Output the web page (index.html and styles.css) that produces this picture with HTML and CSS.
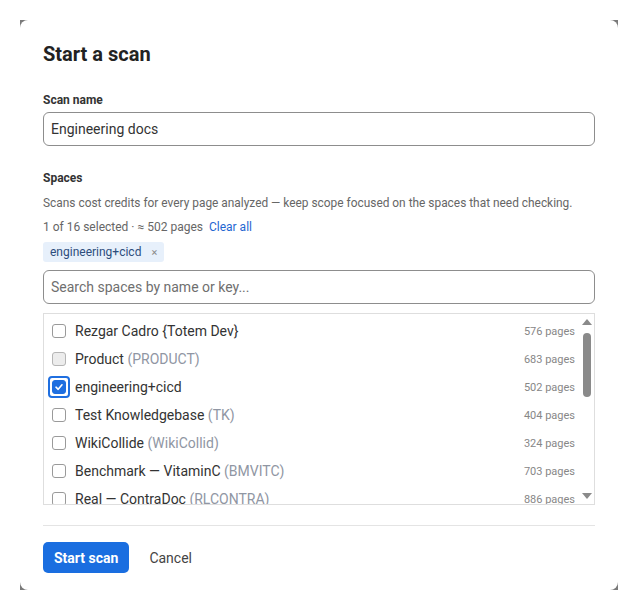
FILE: index.html
```html
<!DOCTYPE html>
<html>
  <head>
    <title>Start a scan</title>
    <link rel="stylesheet" href="styles.css">
  </head>
  <body>
    <div class="frame">
      <div class="dialog">
        <h1 class="title">Start a scan</h1>

        <div class="label label-first">Scan name</div>
        <div class="input">Engineering docs</div>

        <div class="label">Spaces</div>
        <p class="help">Scans cost credits for every page analyzed — keep scope focused on the spaces that need checking.</p>
        <div class="summary">
          <span>1 of 16 selected · ≈ 502 pages</span>
          <span class="link">Clear all</span>
        </div>
        <div class="chips">
          <span class="chip">engineering+cicd <span class="chip-x">×</span></span>
        </div>
        <div class="input placeholder">Search spaces by name or key...</div>

        <div class="listbox">
          <div class="rows">
            <div class="row">
              <span class="check"></span>
              <span class="name">Rezgar Cadro {Totem Dev}</span>
              <span class="pages">576 pages</span>
            </div>
            <div class="row">
              <span class="check check-hover"></span>
              <span class="name">Product <span class="key">(PRODUCT)</span></span>
              <span class="pages">683 pages</span>
            </div>
            <div class="row">
              <span class="ring">
                <span class="check check-on">
                  <svg width="10" height="10" viewBox="0 0 10 10"><path d="M2 5.2 L4.2 7.3 L8 2.8" fill="none" stroke="#fff" stroke-width="1.6" stroke-linecap="round" stroke-linejoin="round"/></svg>
                </span>
              </span>
              <span class="name">engineering+cicd</span>
              <span class="pages">502 pages</span>
            </div>
            <div class="row">
              <span class="check"></span>
              <span class="name">Test Knowledgebase <span class="key">(TK)</span></span>
              <span class="pages">404 pages</span>
            </div>
            <div class="row">
              <span class="check"></span>
              <span class="name">WikiCollide <span class="key">(WikiCollid)</span></span>
              <span class="pages">324 pages</span>
            </div>
            <div class="row">
              <span class="check"></span>
              <span class="name">Benchmark — VitaminC <span class="key">(BMVITC)</span></span>
              <span class="pages">703 pages</span>
            </div>
            <div class="row">
              <span class="check"></span>
              <span class="name">Real — ContraDoc <span class="key">(RLCONTRA)</span></span>
              <span class="pages">886 pages</span>
            </div>
          </div>
          <div class="scrollbar">
            <span class="arrow arrow-up"></span>
            <div class="track"><div class="thumb"></div></div>
            <span class="arrow arrow-down"></span>
          </div>
        </div>

        <div class="divider"></div>

        <div class="actions">
          <button class="button primary">Start scan</button>
          <button class="button plain">Cancel</button>
        </div>
      </div>
    </div>
  </body>
</html>
```

FILE: styles.css
```css
body {
  margin: 0;
  padding: 0;
  background-color: #fff;
  font-family: Roboto, "Noto Sans", sans-serif;
  color: #333;
}

/* the grey shows only at the rounded corners of the dialog */
.frame {
  margin: 20px;
  width: 598px;
  height: 570px;
  background-color: #7a7a7a;
}

.dialog {
  box-sizing: border-box;
  height: 100%;
  padding: 20px 23px;
  background-color: #fff;
  border-radius: 8px;
}

.title {
  margin: 0;
  font-size: 20px;
  line-height: 28px;
  font-weight: 700;
  color: #222;
}

.label {
  margin-top: 24px;
  margin-bottom: 4px;
  font-size: 12px;
  line-height: 16px;
  font-weight: 700;
  color: #333;
}

.input {
  box-sizing: border-box;
  height: 34px;
  padding: 0 7px;
  border: 1px solid #8d8d8d;
  border-radius: 6px;
  font-size: 14px;
  line-height: 32px;
  color: #333;
}

.placeholder {
  color: #6f6f6f;
}

.help {
  margin: 9px 0 0 0;
  font-size: 11.9px;
  line-height: 16px;
  color: #666;
  white-space: nowrap;
}

.summary {
  margin-top: 8px;
  display: flex;
  gap: 6px;
  font-size: 12px;
  line-height: 16px;
  color: #666;
}

.link {
  color: #1f66d1;
}

.chips {
  margin-top: 7px;
  margin-bottom: 8px;
  display: flex;
}

.chip {
  display: inline-flex;
  align-items: center;
  gap: 10px;
  height: 20px;
  padding: 0 7px;
  border-radius: 3px;
  background-color: #e7f0fb;
  color: #2d4d7c;
  font-size: 12px;
}

.chip-x {
  color: #8a8a8a;
  font-size: 11px;
}

.listbox {
  margin-top: 9px;
  height: 192px;
  box-sizing: border-box;
  border: 1px solid #dedede;
  display: flex;
}

.rows {
  flex: 1;
  overflow: hidden;
  padding: 3px 4px 0 8px;
}

.row {
  height: 28px;
  display: flex;
  align-items: center;
  font-size: 14px;
  color: #333;
}

.check {
  box-sizing: border-box;
  width: 14px;
  height: 14px;
  border: 1px solid #9a9a9a;
  border-radius: 3px;
  background-color: #fff;
  display: flex;
  align-items: center;
  justify-content: center;
}

.check-hover {
  background-color: #ececec;
  border-color: #b5b5b5;
}

.check-on {
  background-color: #1f6fe0;
  border-color: #1f6fe0;
}

.ring {
  margin: 0 -4px;
  padding: 2px;
  border: 2px solid #1f6fe0;
  border-radius: 4px;
  display: flex;
}

.name {
  margin-left: 9px;
  flex: 1;
  white-space: nowrap;
}

.key {
  color: #9096a3;
}

.pages {
  font-size: 11px;
  color: #878787;
}

.scrollbar {
  width: 15px;
  display: flex;
  flex-direction: column;
  align-items: center;
}

.arrow {
  width: 0;
  height: 0;
  border-left: 5px solid transparent;
  border-right: 5px solid transparent;
}

.arrow-up {
  margin-top: 5px;
  border-bottom: 6px solid #8a8a8a;
}

.arrow-down {
  margin-bottom: 5px;
  border-top: 6px solid #8a8a8a;
}

.track {
  flex: 1;
  width: 100%;
  display: flex;
  justify-content: center;
  padding-top: 8px;
}

.thumb {
  width: 8px;
  height: 64px;
  border-radius: 4px;
  background-color: #8a8a8a;
}

.divider {
  margin-top: 20px;
  height: 1px;
  background-color: #e4e4e4;
}

.actions {
  margin-top: 16px;
  display: flex;
  align-items: center;
  gap: 4px;
}

.button {
  font-family: Roboto, "Noto Sans", sans-serif;
  font-size: 14px;
  border: none;
  border-radius: 5px;
  height: 31px;
  padding: 0 11px;
  cursor: pointer;
}

.primary {
  background-color: #1a6ee0;
  color: #fff;
  font-weight: 700;
}

.plain {
  background-color: transparent;
  color: #444;
  padding: 0 16px;
}
```
